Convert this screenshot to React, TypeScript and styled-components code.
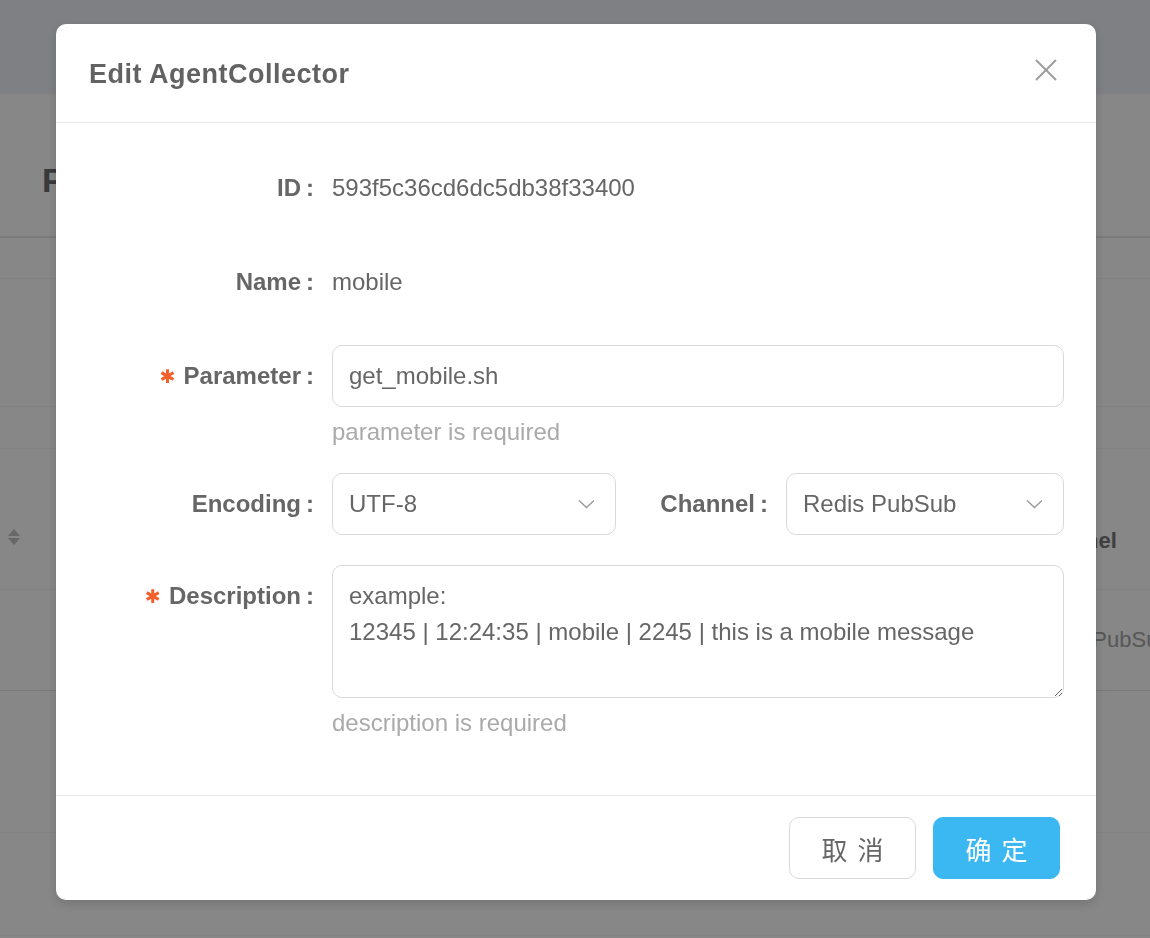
import { createGlobalStyle, styled } from "styled-components";

const GlobalStyle = createGlobalStyle`
  html, body {
    margin: 0;
    padding: 0;
  }
  body {
    font-family: "Liberation Sans", "Noto Sans CJK SC", sans-serif;
    background: #ffffff;
  }
  * {
    box-sizing: border-box;
  }
`;

/* ---------- page behind the dialog ---------- */

const Page = styled.div`
  width: 100%;
  min-height: 100vh;
  background: #ffffff;
  overflow: hidden;
`;

const TopBar = styled.div`
  height: 94px;
  background: #f0f2f7;
  border-bottom: 1px solid #f3f3f3;
`;

const TitleSection = styled.div`
  height: 144px;
  padding: 66px 0 0 42px;
  border-bottom: 2px solid #e8e8e8;
`;

const PageTitle = styled.h1`
  margin: 0;
  font-size: 34px;
  line-height: 40px;
  font-weight: 700;
  color: #6d6d74;
`;

const TableRow = styled.div<{ $height: number; $strong?: boolean; $pad?: number }>`
  height: ${(p) => p.$height}px;
  display: grid;
  grid-template-columns: 1fr 120px;
  align-items: ${(p) => (p.$pad ? "start" : "center")};
  padding-top: ${(p) => p.$pad ?? 0}px;
  border-bottom: 1px solid ${(p) => (p.$strong ? "#e6e6e6" : "#f6f6f6")};
`;

const SortCell = styled.div`
  padding: 10px 0 0 8px;
  display: flex;
  flex-direction: column;
  gap: 2px;
`;

const Triangle = styled.span<{ $down?: boolean }>`
  width: 0;
  height: 0;
  border-left: 6px solid transparent;
  border-right: 6px solid transparent;
  ${(p) =>
    p.$down
      ? "border-top: 7px solid #c4c4c4;"
      : "border-bottom: 7px solid #c4c4c4;"}
`;

const HeadCell = styled.div`
  font-size: 22px;
  line-height: 40px;
  font-weight: 700;
  color: #787878;
  white-space: nowrap;
  padding-top: 2px;
`;

const DataCell = styled.div`
  font-size: 22px;
  line-height: 40px;
  color: #a4a4a4;
  white-space: nowrap;
`;

const Mask = styled.div`
  position: fixed;
  inset: 0;
  background: rgba(0, 0, 0, 0.47);
`;

/* ---------- dialog ---------- */

const ModalWrap = styled.div`
  position: fixed;
  inset: 0;
  display: flex;
  align-items: flex-start;
  padding: 24px 0 0 56px;
`;

const Modal = styled.div`
  position: relative;
  width: 1040px;
  background: #ffffff;
  border-radius: 10px;
  box-shadow: 0 4px 12px rgba(0, 0, 0, 0.15);
`;

const Header = styled.div`
  height: 99px;
  padding: 0 33px;
  display: flex;
  align-items: center;
  border-bottom: 1px solid #e9e9e9;
`;

const Title = styled.div`
  font-size: 27px;
  letter-spacing: 0.5px;
  font-weight: 700;
  color: #626262;
  margin-top: 2px;
`;

const CloseButton = styled.button`
  position: absolute;
  top: 35px;
  right: 39px;
  width: 22px;
  height: 22px;
  padding: 0;
  border: 0;
  background: transparent;
  cursor: pointer;
  display: flex;
`;

const Body = styled.div`
  padding: 34px 32px 55px;
`;

const FormRow = styled.div<{ $gap: number }>`
  display: grid;
  grid-template-columns: 228px 1fr;
  column-gap: 16px;
  margin-bottom: ${(p) => p.$gap}px;
  &:last-child {
    margin-bottom: 0;
  }
`;

const SplitRow = styled.div<{ $gap: number }>`
  display: grid;
  grid-template-columns: 228px 284px 138px 1fr;
  column-gap: 16px;
  margin-bottom: ${(p) => p.$gap}px;
`;

const Label = styled.label`
  text-align: right;
  font-size: 24px;
  line-height: 62px;
  height: 62px;
  font-weight: 700;
  color: #666666;
  white-space: nowrap;
  padding-right: 2px;
`;

const Star = styled.span`
  font-family: "DejaVu Sans", sans-serif;
  font-weight: 400;
  font-size: 19px;
  color: #f4602c;
  margin-right: 8px;
  vertical-align: 1px;
`;

const Colon = styled.span`
  margin-left: 5px;
`;

const Value = styled.div`
  font-size: 24px;
  line-height: 62px;
  color: #666666;
`;

const Control = styled.div`
  display: flex;
  flex-direction: column;
`;

const TextInput = styled.input`
  height: 62px;
  width: 100%;
  padding: 0 16px;
  border: 1px solid #d9d9d9;
  border-radius: 10px;
  font-family: inherit;
  font-size: 24px;
  color: #666666;
  outline: none;
`;

const Select = styled.div`
  height: 62px;
  padding: 0 20px 0 16px;
  border: 1px solid #d9d9d9;
  border-radius: 10px;
  display: flex;
  align-items: center;
  justify-content: space-between;
  font-size: 24px;
  color: #666666;
  cursor: pointer;
`;

const TextArea = styled.textarea`
  width: 100%;
  height: 133px;
  padding: 12px 16px;
  border: 1px solid #d9d9d9;
  border-radius: 10px;
  font-family: inherit;
  font-size: 24px;
  line-height: 36px;
  color: #666666;
  resize: vertical;
  outline: none;
`;

const Help = styled.div`
  margin-top: 8px;
  font-size: 24px;
  line-height: 34px;
  color: #aaaaaa;
`;

const Footer = styled.div`
  border-top: 1px solid #e9e9e9;
  padding: 21px 36px 21px;
  display: flex;
  justify-content: flex-end;
  gap: 17px;
`;

const Button = styled.button<{ $primary?: boolean }>`
  width: 127px;
  height: 62px;
  border-radius: 10px;
  border: 1px solid ${(p) => (p.$primary ? "#3bb8f2" : "#d9d9d9")};
  background: ${(p) => (p.$primary ? "#3bb8f2" : "#ffffff")};
  color: ${(p) => (p.$primary ? "#ffffff" : "#666666")};
  font-family: "Noto Sans CJK SC", sans-serif;
  font-size: 26px;
  letter-spacing: 10px;
  text-indent: 10px;
  cursor: pointer;
`;

function Chevron() {
  return (
    <svg width="17" height="10" viewBox="0 0 17 10" fill="none">
      <polyline points="1,1.5 8.5,8.5 16,1.5" stroke="#9a9a9a" strokeWidth="1.4" />
    </svg>
  );
}

function CloseIcon() {
  return (
    <svg width="22" height="22" viewBox="0 0 22 22" fill="none">
      <line x1="1" y1="1" x2="21" y2="21" stroke="#9c9c9c" strokeWidth="2" />
      <line x1="21" y1="1" x2="1" y2="21" stroke="#9c9c9c" strokeWidth="2" />
    </svg>
  );
}

export default function App() {
  return (
    <>
      <GlobalStyle />
      <Page>
        <TopBar />
        <TitleSection>
          <PageTitle>Plugins</PageTitle>
        </TitleSection>
        <TableRow $height={41} />
        <TableRow $height={128} />
        <TableRow $height={42} />
        <TableRow $height={141} $pad={70}>
          <SortCell>
            <Triangle />
            <Triangle $down />
          </SortCell>
          <HeadCell>Channel</HeadCell>
        </TableRow>
        <TableRow $height={101} $strong>
          <div />
          <DataCell>Redis PubSub</DataCell>
        </TableRow>
        <TableRow $height={142} />
        <TableRow $height={103} />
      </Page>
      <Mask />
      <ModalWrap>
        <Modal>
          <Header>
            <Title>Edit AgentCollector</Title>
          </Header>
          <CloseButton aria-label="close">
            <CloseIcon />
          </CloseButton>
          <Body>
            <FormRow $gap={32}>
              <Label>
                ID<Colon>:</Colon>
              </Label>
              <Value>593f5c36cd6dc5db38f33400</Value>
            </FormRow>
            <FormRow $gap={32}>
              <Label>
                Name<Colon>:</Colon>
              </Label>
              <Value>mobile</Value>
            </FormRow>
            <FormRow $gap={24}>
              <Label>
                <Star>✱</Star>Parameter<Colon>:</Colon>
              </Label>
              <Control>
                <TextInput defaultValue="get_mobile.sh" />
                <Help>parameter is required</Help>
              </Control>
            </FormRow>
            <SplitRow $gap={30}>
              <Label>
                Encoding<Colon>:</Colon>
              </Label>
              <Select>
                <span>UTF-8</span>
                <Chevron />
              </Select>
              <Label>
                Channel<Colon>:</Colon>
              </Label>
              <Select>
                <span>Redis PubSub</span>
                <Chevron />
              </Select>
            </SplitRow>
            <FormRow $gap={0}>
              <Label>
                <Star>✱</Star>Description<Colon>:</Colon>
              </Label>
              <Control>
                <TextArea
                  defaultValue={
                    "example:\n12345 | 12:24:35 | mobile | 2245 | this is a mobile message"
                  }
                />
                <Help>description is required</Help>
              </Control>
            </FormRow>
          </Body>
          <Footer>
            <Button>取消</Button>
            <Button $primary>确定</Button>
          </Footer>
        </Modal>
      </ModalWrap>
    </>
  );
}
